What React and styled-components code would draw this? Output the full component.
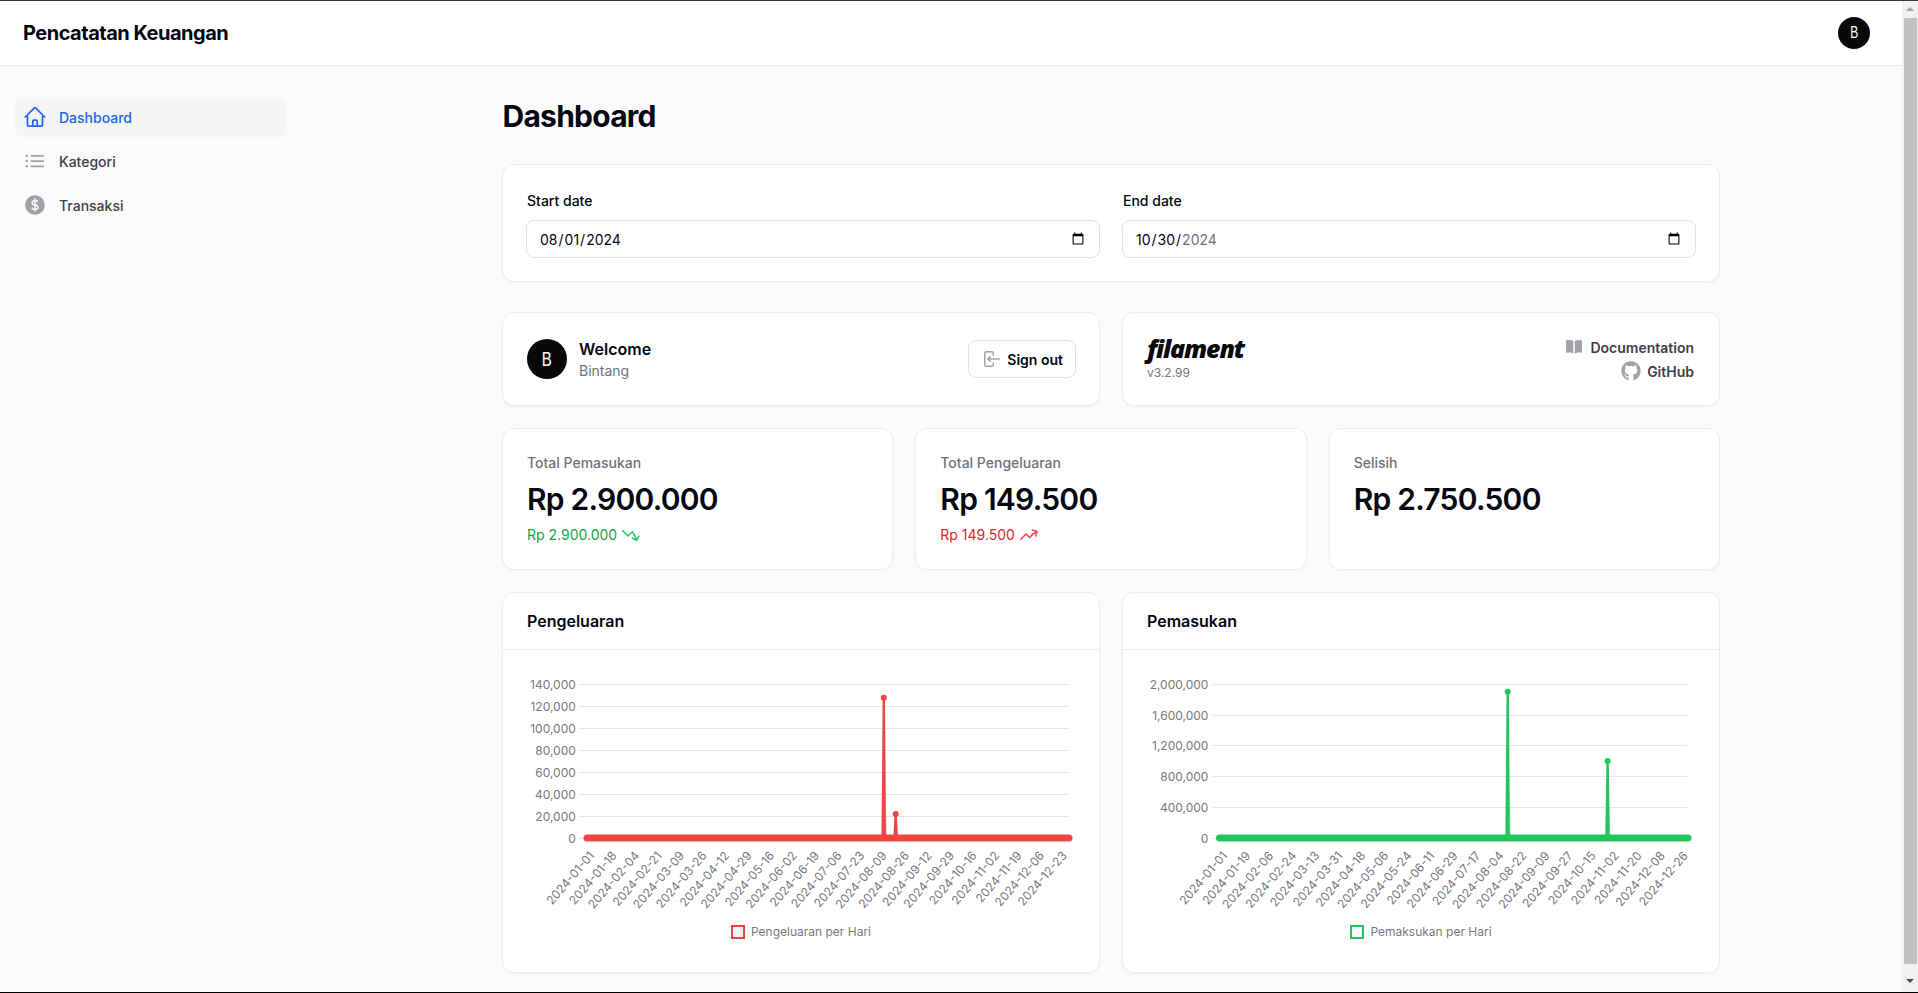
import React from "react";
import styled, { createGlobalStyle } from "styled-components";
import {
  HiOutlineHome,
  HiOutlineListBullet,
  HiCurrencyDollar,
  HiMiniArrowLeftOnRectangle,
  HiMiniBookOpen,
  HiMiniArrowTrendingDown,
  HiMiniArrowTrendingUp,
} from "react-icons/hi2";
import { FaGithub } from "react-icons/fa";

const Global = createGlobalStyle`
  html, body { margin: 0; padding: 0; height: 100%; overflow: hidden; }
  body { font-family: Inter, "Liberation Sans", sans-serif; background: #fafafa; color: #030712; }
  * { box-sizing: border-box; }
`;

const Frame = styled.div`
  height: 993px;
  display: flex;
  flex-direction: column;
  overflow: hidden;
  border-top: 1px solid #3a3a3a;
  border-bottom: 1px solid #000;
`;
const Window = styled.div`
  flex: 1;
  min-height: 0;
  display: flex;
`;
const Page = styled.div`
  flex: 1;
  min-width: 0;
  display: flex;
  flex-direction: column;
`;
const Scrollbar = styled.div`
  width: 16px;
  flex: none;
  background: #f1f1f1;
  display: flex;
  flex-direction: column;
  align-items: center;
`;
const ArrowUp = styled.div`
  margin-top: 6px;
  width: 0;
  height: 0;
  border-left: 4px solid transparent;
  border-right: 4px solid transparent;
  border-bottom: 4px solid #a3a3a3;
`;
const ArrowDown = styled.div`
  margin-top: 15px;
  width: 0;
  height: 0;
  border-left: 4px solid transparent;
  border-right: 4px solid transparent;
  border-top: 4px solid #505050;
`;
const Thumb = styled.div`
  margin: 7px 0 0 1px;
  width: 13px;
  height: 946px;
  background: #c1c1c1;
`;

const Topbar = styled.header`
  height: 65px;
  flex: none;
  background: #fff;
  border-bottom: 1px solid #e7e7e8;
  display: flex;
  align-items: center;
  justify-content: space-between;
  padding: 0 32px 0 23px;
`;
const Brand = styled.div`
  font-size: 20px;
  line-height: 20px;
  font-weight: 700;
  letter-spacing: -0.5px;
  color: #030712;
`;
const Avatar = styled.div`
  width: ${(p) => p.$size}px;
  height: ${(p) => p.$size}px;
  flex: none;
  border-radius: 50%;
  background: #09090b;
  color: #fff;
  display: flex;
  align-items: center;
  justify-content: center;
  font-family: "Liberation Sans", sans-serif;
  font-size: ${(p) => (p.$size > 32 ? 20 : 16)}px;
  span { display: inline-block; transform: scaleX(0.75); }
`;

const Body = styled.div`
  flex: 1;
  min-height: 0;
  display: flex;
`;
const Sidebar = styled.aside`
  width: 320px;
  flex: none;
  padding: 31px 34px 0 15px;
  display: flex;
  flex-direction: column;
  gap: 4px;
`;
const NavItem = styled.a`
  height: 40px;
  display: flex;
  align-items: center;
  gap: 12px;
  padding: 0 8px;
  border-radius: 8px;
  font-size: 14px;
  font-weight: 500;
  background: ${(p) => (p.$active ? "#f4f4f5" : "transparent")};
  color: ${(p) => (p.$active ? "#2563eb" : "#3f3f46")};
  svg {
    width: 24px;
    height: 24px;
    flex: none;
    color: ${(p) => (p.$active ? "#2563eb" : "#a1a1aa")};
  }
`;
const Main = styled.main`
  flex: 1;
  min-width: 0;
  display: flex;
  justify-content: center;
`;
const Content = styled.div`
  width: 1280px;
  padding: 32px 31px 0;
  display: flex;
  flex-direction: column;
`;
const Heading = styled.h1`
  margin: 0 0 30px 0.5px;
  font-size: 30px;
  line-height: 36px;
  font-weight: 700;
  letter-spacing: -0.75px;
  color: #030712;
`;
const Card = styled.section`
  background: #fff;
  border: 1px solid #ececed;
  border-radius: 12px;
  box-shadow: 0 1px 2px rgba(0, 0, 0, 0.04);
`;
const FilterCard = styled(Card)`
  height: 118px;
  padding: 26px 23px 0;
  margin-bottom: 30px;
  display: grid;
  grid-template-columns: 1fr 1fr;
  column-gap: 22px;
`;
const Field = styled.label`
  display: flex;
  flex-direction: column;
  gap: 9px;
  font-size: 14px;
  line-height: 20px;
  font-weight: 500;
  color: #030712;
`;
const FieldLabel = styled.span`
  padding-left: 1px;
`;
const DateInput = styled.input`
  height: 38px;
  width: 100%;
  border: 1px solid #e2e2e4;
  border-radius: 8px;
  background: #fff;
  padding: 0 12px;
  font-family: Inter, sans-serif;
  font-size: 14px;
  color: #030712;
  outline: none;
  &::-webkit-datetime-edit-year-field {
    color: ${(p) => (p.$dimYear ? "#71717a" : "#030712")};
  }
`;
const WidgetRow = styled.div`
  display: grid;
  grid-template-columns: 1fr 1fr;
  gap: 22px;
  margin-bottom: 22px;
`;
const Widget = styled(Card)`
  height: 94px;
  padding: 0 23px 0 24px;
  display: flex;
  align-items: center;
  justify-content: space-between;
`;
const UserBox = styled.div`
  display: flex;
  align-items: center;
  gap: 12px;
`;
const Stack = styled.div`
  display: flex;
  flex-direction: column;
`;
const WelcomeTitle = styled.div`
  font-size: 16px;
  line-height: 24px;
  font-weight: 600;
`;
const Muted = styled.div`
  font-size: 14px;
  line-height: 20px;
  color: #71717a;
`;
const SignOut = styled.button`
  height: 38px;
  padding: 0 12px;
  display: flex;
  align-items: center;
  gap: 6px;
  background: #fff;
  border: 1px solid #e2e2e4;
  border-radius: 8px;
  font-family: Inter, sans-serif;
  font-size: 14px;
  font-weight: 600;
  color: #030712;
  svg { width: 20px; height: 20px; color: #a1a1aa; }
`;
const Logo = styled.div`
  font-family: "Open Sans", sans-serif;
  font-style: italic;
  font-weight: 800;
  font-size: 25px;
  line-height: 22px;
  letter-spacing: -1.15px;
  color: #09090b;
`;
const Version = styled.div`
  margin-top: 6px;
  font-size: 12px;
  line-height: 16px;
  color: #71717a;
`;
const Links = styled.div`
  margin-right: 2px;
  display: flex;
  flex-direction: column;
  align-items: flex-end;
  gap: 4px;
`;
const DocLink = styled.a`
  display: flex;
  align-items: center;
  gap: 6px;
  height: 20px;
  font-size: 14px;
  font-weight: 600;
  color: #3f3f46;
  svg { width: 20px; height: 20px; color: #a1a1aa; }
`;
const StatRow = styled.div`
  display: grid;
  grid-template-columns: repeat(3, 1fr);
  gap: 22px;
  margin-bottom: 22px;
`;
const Stat = styled(Card)`
  height: 142px;
  padding: 24px;
  display: flex;
  flex-direction: column;
  gap: 8px;
`;
const StatLabel = styled.div`
  font-size: 14px;
  line-height: 20px;
  font-weight: 500;
  color: #71717a;
`;
const StatValue = styled.div`
  font-size: 30px;
  line-height: 36px;
  font-weight: 600;
  letter-spacing: -0.75px;
  color: #030712;
`;
const StatTrend = styled.div`
  display: flex;
  align-items: center;
  gap: 4px;
  font-size: 14px;
  line-height: 20px;
  color: ${(p) => p.$text};
  svg { width: 20px; height: 20px; color: ${(p) => p.$icon}; }
`;
const ChartRow = styled.div`
  display: grid;
  grid-template-columns: 1fr 1fr;
  gap: 22px;
`;
const ChartCard = styled(Card)`
  height: 381px;
  display: flex;
  flex-direction: column;
`;
const ChartHeader = styled.div`
  height: 57px;
  flex: none;
  border-bottom: 1px solid #ececed;
  padding: 0 24px;
  display: flex;
  align-items: center;
  font-size: 16px;
  font-weight: 600;
`;
const ChartBody = styled.div`
  flex: 1;
  padding: 23px 24px 0;
  display: flex;
  flex-direction: column;
`;
const ChartSvg = styled.svg`
  display: block;
  width: 548px;
  height: 245px;
  overflow: visible;
  text {
    font-family: Inter, sans-serif;
    font-size: 12px;
    fill: #78787f;
  }
`;
const Legend = styled.div`
  margin-top: 6px;
  display: flex;
  align-items: center;
  justify-content: center;
  gap: 6px;
  font-size: 12px;
  line-height: 16px;
  color: #78787f;
`;
const LegendBox = styled.span`
  width: 14px;
  height: 14px;
  border: 2px solid ${(p) => p.$color};
  background: ${(p) => p.$fill};
`;

const BASE = 838;

function LineChart({ ox, gridLeft, gridRight, yTicks, labelX, dataLeft, dataRight, spikes, color, xLabels, xFirst, xStep }) {
  return (
    <ChartSvg viewBox={`${ox} 673 548 245`}>
      {yTicks.map(([label, y]) => (
        <g key={label}>
          <line x1={gridLeft} x2={gridRight} y1={Math.floor(y) + 0.5} y2={Math.floor(y) + 0.5} stroke="#e5e5e5" strokeWidth="1" />
          <text x={labelX} y={y + 4.5} textAnchor="end">{label}</text>
        </g>
      ))}
      {spikes.map(([x, y]) => (
        <g key={x}>
          <polygon points={`${x - 3},${BASE} ${x},${y} ${x + 3},${BASE}`} fill={color} fillOpacity="0.25" />
          <polyline points={`${x - 1},${BASE} ${x},${y} ${x + 1},${BASE}`} fill="none" stroke={color} strokeWidth="2.4" />
          <circle cx={x} cy={y} r="3" fill={color} />
        </g>
      ))}
      <line x1={dataLeft} x2={dataRight} y1={BASE} y2={BASE} stroke={color} strokeWidth="7" strokeLinecap="round" />
      {xLabels.map((d, i) => {
        const x = xFirst + i * xStep;
        return (
          <text key={d} x={x} y={856} textAnchor="end" transform={`rotate(-49 ${x} 856)`}>{d}</text>
        );
      })}
    </ChartSvg>
  );
}

const leftLabels = ["01-01","01-18","02-04","02-21","03-09","03-26","04-12","04-29","05-16","06-02","06-19","07-06","07-23","08-09","08-26","09-12","09-29","10-16","11-02","11-19","12-06","12-23"].map((d) => `2024-${d}`);
const rightLabels = ["01-01","01-19","02-06","02-24","03-13","03-31","04-18","05-06","05-24","06-11","06-29","07-17","08-04","08-22","09-09","09-27","10-15","11-02","11-20","12-08","12-26"].map((d) => `2024-${d}`);
const leftTicks = ["140,000","120,000","100,000","80,000","60,000","40,000","20,000","0"].map((l, i) => [l, 684.3 + i * 21.96]);
const rightTicks = ["2,000,000","1,600,000","1,200,000","800,000","400,000","0"].map((l, i) => [l, 684.3 + i * 30.74]);

export default function App() {
  return (
    <Frame>
      <Global />
      <Window>
        <Page>
          <Topbar>
            <Brand>Pencatatan Keuangan</Brand>
            <Avatar $size={32}><span>B</span></Avatar>
          </Topbar>
          <Body>
            <Sidebar>
              <NavItem $active><HiOutlineHome strokeWidth={1.75} />Dashboard</NavItem>
              <NavItem><HiOutlineListBullet strokeWidth={1.75} />Kategori</NavItem>
              <NavItem><HiCurrencyDollar />Transaksi</NavItem>
            </Sidebar>
            <Main>
              <Content>
                <Heading>Dashboard</Heading>
                <FilterCard>
                  <Field><FieldLabel>Start date</FieldLabel><DateInput type="date" defaultValue="2024-08-01" /></Field>
                  <Field><FieldLabel>End date</FieldLabel><DateInput type="date" defaultValue="2024-10-30" $dimYear /></Field>
                </FilterCard>
                <WidgetRow>
                  <Widget>
                    <UserBox>
                      <Avatar $size={40}><span>B</span></Avatar>
                      <Stack>
                        <WelcomeTitle>Welcome</WelcomeTitle>
                        <Muted>Bintang</Muted>
                      </Stack>
                    </UserBox>
                    <SignOut><HiMiniArrowLeftOnRectangle />Sign out</SignOut>
                  </Widget>
                  <Widget>
                    <Stack>
                      <Logo>filament</Logo>
                      <Version>v3.2.99</Version>
                    </Stack>
                    <Links>
                      <DocLink><HiMiniBookOpen />Documentation</DocLink>
                      <DocLink><FaGithub />GitHub</DocLink>
                    </Links>
                  </Widget>
                </WidgetRow>
                <StatRow>
                  <Stat>
                    <StatLabel>Total Pemasukan</StatLabel>
                    <StatValue>Rp 2.900.000</StatValue>
                    <StatTrend $text="#16a34a" $icon="#22c55e">Rp 2.900.000<HiMiniArrowTrendingDown /></StatTrend>
                  </Stat>
                  <Stat>
                    <StatLabel>Total Pengeluaran</StatLabel>
                    <StatValue>Rp 149.500</StatValue>
                    <StatTrend $text="#dc2626" $icon="#ef4444">Rp 149.500<HiMiniArrowTrendingUp /></StatTrend>
                  </Stat>
                  <Stat>
                    <StatLabel>Selisih</StatLabel>
                    <StatValue>Rp 2.750.500</StatValue>
                  </Stat>
                </StatRow>
                <ChartRow>
                  <ChartCard>
                    <ChartHeader>Pengeluaran</ChartHeader>
                    <ChartBody>
                      <LineChart ox={527} gridLeft={578.5} gridRight={1069} yTicks={leftTicks} labelX={575.8} dataLeft={587} dataRight={1069} spikes={[[883.8, 697.7], [895.7, 814]]} color="#ef4444" xLabels={leftLabels} xFirst={595} xStep={22.5} />
                      <Legend><LegendBox $color="#ef4444" $fill="#fef2f2" />Pengeluaran per Hari</Legend>
                    </ChartBody>
                  </ChartCard>
                  <ChartCard>
                    <ChartHeader>Pemasukan</ChartHeader>
                    <ChartBody>
                      <LineChart ox={1147} gridLeft={1212.6} gridRight={1687} yTicks={rightTicks} labelX={1208.4} dataLeft={1219.5} dataRight={1688} spikes={[[1507.7, 691.7], [1607.6, 761]]} color="#22c55e" xLabels={rightLabels} xFirst={1228} xStep={23.03} />
                      <Legend><LegendBox $color="#22c55e" $fill="#f0fdf4" />Pemaksukan per Hari</Legend>
                    </ChartBody>
                  </ChartCard>
                </ChartRow>
              </Content>
            </Main>
          </Body>
        </Page>
        <Scrollbar>
          <ArrowUp />
          <Thumb />
          <ArrowDown />
        </Scrollbar>
      </Window>
    </Frame>
  );
}
